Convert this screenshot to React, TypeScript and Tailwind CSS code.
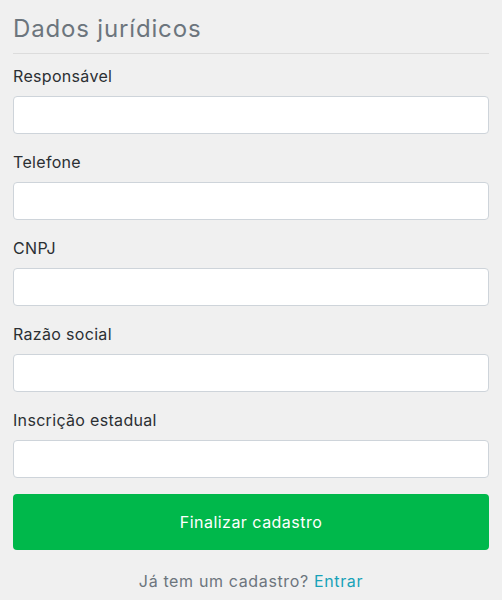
import React from "react";

const fields = ["Responsável", "Telefone", "CNPJ", "Razão social", "Inscrição estadual"];

export default function App() {
  return (
    <div
      className="min-h-[600px] w-full bg-[#f0f0f0] px-[13px] pt-[14px] tracking-[0.03em]"
      style={{ fontFamily: "Inter, 'Open Sans', sans-serif" }}
    >
      <h3 className="border-b border-[#dcdcdc] pb-[10px] text-[24px] leading-[29px] font-normal tracking-[0.035em] text-[#6c757d]">
        Dados jurídicos
      </h3>
      <div className="mt-[10px] flex flex-col gap-[16px]">
        {fields.map((f) => (
          <div key={f} className="flex flex-col">
            <label className="mb-[8px] text-[16px] leading-[24px] tracking-[0.02em] text-[#2b2f33]">{f}</label>
            <input
              type="text"
              className="h-[38px] w-full rounded-[4px] border border-[#ced4da] bg-white px-3 outline-none"
            />
          </div>
        ))}
      </div>
      <button className="mt-[16px] h-[56px] w-full rounded-[4px] bg-[#00b84b] text-[16px] tracking-[0.03em] text-white">
        Finalizar cadastro
      </button>
      <p className="mt-[19px] text-center text-[16px] leading-[24px] tracking-[0.04em] text-[#6c757d]">
        Já tem um cadastro? <a className="text-[#17a2b8]">Entrar</a>
      </p>
    </div>
  );
}
